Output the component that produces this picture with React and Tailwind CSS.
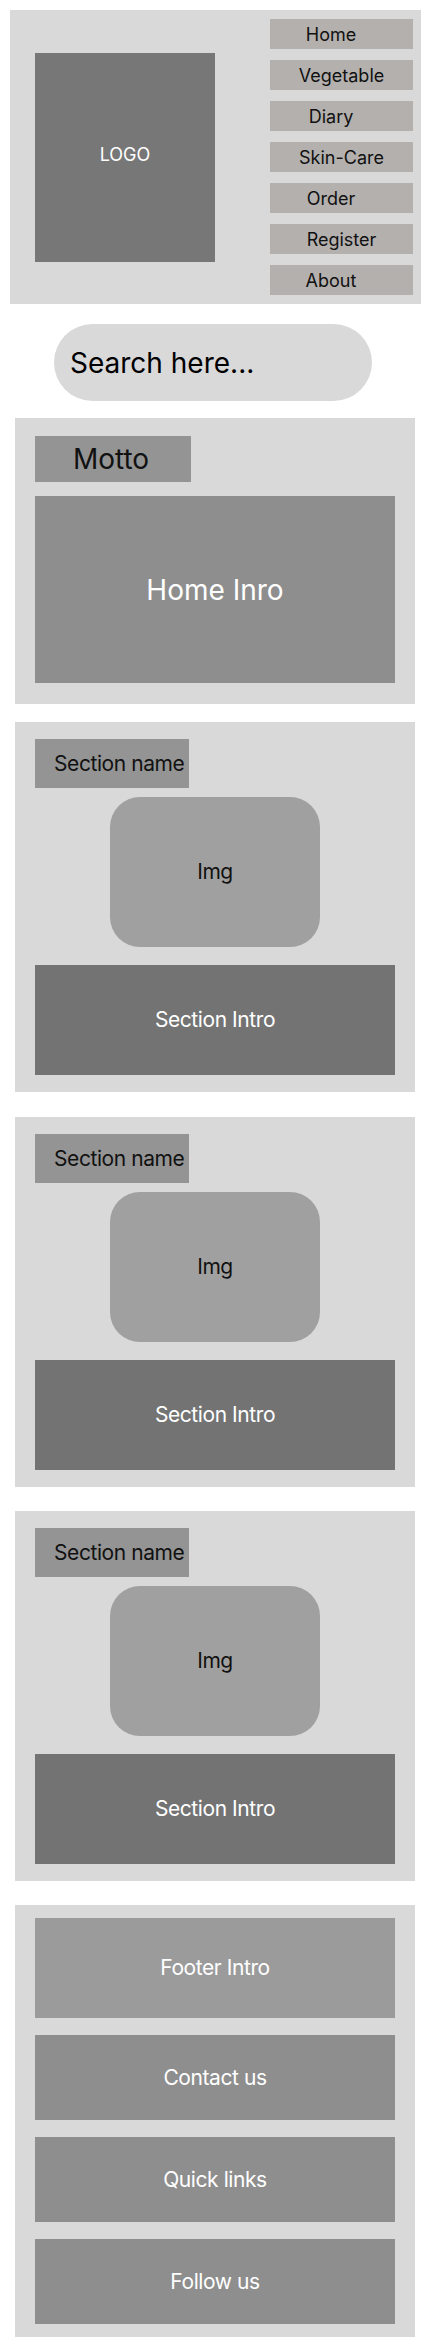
import React from "react";

const nav = [
  { label: "Home", shift: true },
  { label: "Vegetable", shift: false },
  { label: "Diary", shift: true },
  { label: "Skin-Care", shift: false },
  { label: "Order", shift: true },
  { label: "Register", shift: false },
  { label: "About", shift: true },
];

function Section() {
  return (
    <section className="mx-[15px] w-[400px] bg-[#d9d9d9] pt-[17px] pb-[17px] px-[20px] flex flex-col">
      <div className="w-[154px] h-[49px] bg-[#949494] flex items-center pl-[19px] whitespace-nowrap text-[21px] tracking-[-0.02em] text-[#111111]">
        Section name
      </div>
      <div className="mt-[9px] self-center w-[210px] h-[150px] rounded-[30px] bg-[#a0a0a0] flex items-center justify-center text-[21px] tracking-[-0.02em] text-[#111111]">
        Img
      </div>
      <div className="mt-[18px] h-[110px] bg-[#737373] flex items-center justify-center text-[21px] tracking-[-0.02em] text-white">
        Section Intro
      </div>
    </section>
  );
}

function FooterBox({ label, tall, light }) {
  return (
    <div
      className={
        (tall ? "h-[100px] " : "h-[85px] ") +
        (light ? "bg-[#9b9b9b] " : "bg-[#8e8e8e] ") +
        "flex items-center justify-center text-[21px] tracking-[-0.02em] text-white"
      }
    >
      {label}
    </div>
  );
}

export default function App() {
  return (
    <div
      className="w-[430px] bg-white pt-[10px] pb-[11px]"
      style={{ fontFamily: "Inter, 'Noto Sans', sans-serif" }}
    >
      <header className="ml-[10px] w-[411px] h-[294px] bg-[#d9d9d9] flex">
        <div className="ml-[25px] mt-[43px] w-[180px] h-[209px] bg-[#777777] flex items-center justify-center pb-[7px] text-[18px] text-white">
          LOGO
        </div>
        <nav className="ml-auto mr-[8px] pt-[9px] flex flex-col gap-[11px]">
          {nav.map((n) => (
            <div
              key={n.label}
              className={
                "w-[143px] h-[30px] bg-[#b3b0ae] flex items-center justify-center whitespace-nowrap text-[18px] text-[#111111] " +
                (n.shift ? "pr-[21px]" : "")
              }
            >
              {n.label}
            </div>
          ))}
        </nav>
      </header>

      <div className="mt-[20px] ml-[54px] w-[318px] h-[77px] rounded-full bg-[#d9d9d9] flex items-center pl-[16px] whitespace-nowrap text-[28px] text-black">
        Search here...
      </div>

      <section className="mt-[17px] mx-[15px] w-[400px] bg-[#d9d9d9] pt-[18px] px-[20px] pb-[21px] flex flex-col">
        <div className="w-[156px] h-[46px] bg-[#949494] flex items-center justify-center pr-[4px] text-[28px] text-[#111111]">
          Motto
        </div>
        <div className="mt-[14px] h-[187px] bg-[#8e8e8e] flex items-center justify-center text-[28px] text-white">
          Home Inro
        </div>
      </section>

      <div className="mt-[18px]">
        <Section />
      </div>
      <div className="mt-[25px]">
        <Section />
      </div>
      <div className="mt-[24px]">
        <Section />
      </div>

      <footer className="mt-[24px] mx-[15px] w-[400px] bg-[#d9d9d9] pt-[13px] pb-[13px] px-[20px] flex flex-col gap-[17px]">
        <FooterBox label="Footer Intro" tall light />
        <FooterBox label="Contact us" />
        <FooterBox label="Quick links" />
        <FooterBox label="Follow us" />
      </footer>
    </div>
  );
}
